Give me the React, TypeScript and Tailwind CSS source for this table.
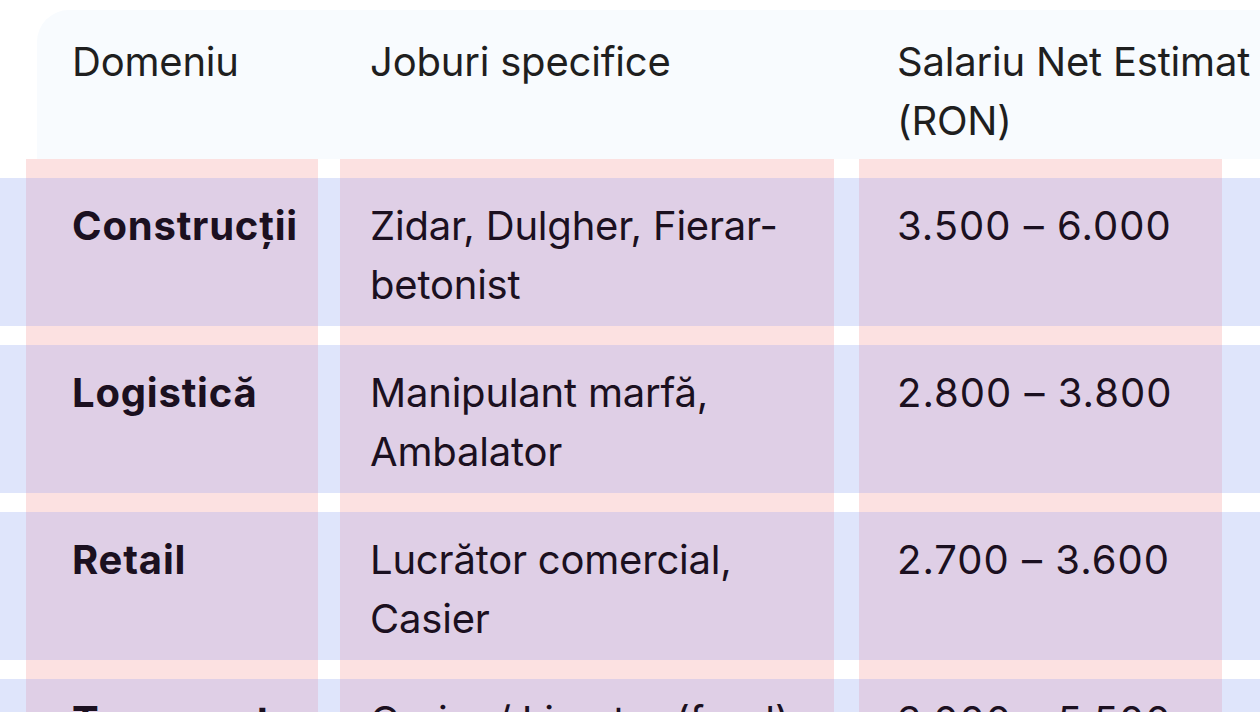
const rows = [
  { domain: "Construcții", jobs: "Zidar, Dulgher, Fierar-betonist", salary: "3.500 – 6.000" },
  { domain: "Logistică", jobs: "Manipulant marfă, Ambalator", salary: "2.800 – 3.800" },
  { domain: "Retail", jobs: "Lucrător comercial, Casier", salary: "2.700 – 3.600" },
  { domain: "Transport", jobs: "Curier / Livrator (food)", salary: "3.000 – 5.500" },
];

const font = { fontFamily: "Inter, 'Noto Sans', sans-serif" };

function Cell({ children, className = "" }: { children?: React.ReactNode; className?: string }) {
  return (
    <div className={`bg-[linear-gradient(to_bottom,#fce1e1_19px,#dfcfe6_19px)] ${className}`}>
      {children}
    </div>
  );
}

export default function App() {
  return (
    <div
      className="h-[712px] w-full overflow-hidden bg-white pt-[10px] text-[40px] leading-[59px] tracking-[-0.2px]"
      style={font}
    >
      {/* HEADER */}
      <div className="ml-[37px] flex h-[149px] rounded-tl-[32px] bg-[#f8fbfe] pl-[35px] pt-[22px] text-[#1f1f1f]">
        <div className="w-[298px] shrink-0">Domeniu</div>
        <div className="w-[527px] shrink-0">Joburi specifice</div>
        <div className="w-[372px] shrink-0">Salariu Net Estimat (RON)</div>
      </div>

      {/* ROWS */}
      {rows.map((r, i) => {
        const pt = i === rows.length - 1 ? "pt-[31px]" : "pt-[37px]";
        return (
          <div
            key={r.domain}
            className="grid h-[167px] grid-cols-[26px_292px_22px_494px_25px_363px_1fr] bg-[linear-gradient(to_bottom,#ffffff_19px,#dfe5fb_19px)] text-[#1b1020]"
          >
            <div />
            <Cell className={`${pt} pl-[46px] font-bold tracking-[0.8px]`}>{r.domain}</Cell>
            <div />
            <Cell className={`${pt} pl-[30px] pr-[20px]`}>{r.jobs}</Cell>
            <div />
            <Cell className={`${pt} pl-[38px] tracking-[1px]`}>{r.salary}</Cell>
            <div />
          </div>
        );
      })}
    </div>
  );
}
